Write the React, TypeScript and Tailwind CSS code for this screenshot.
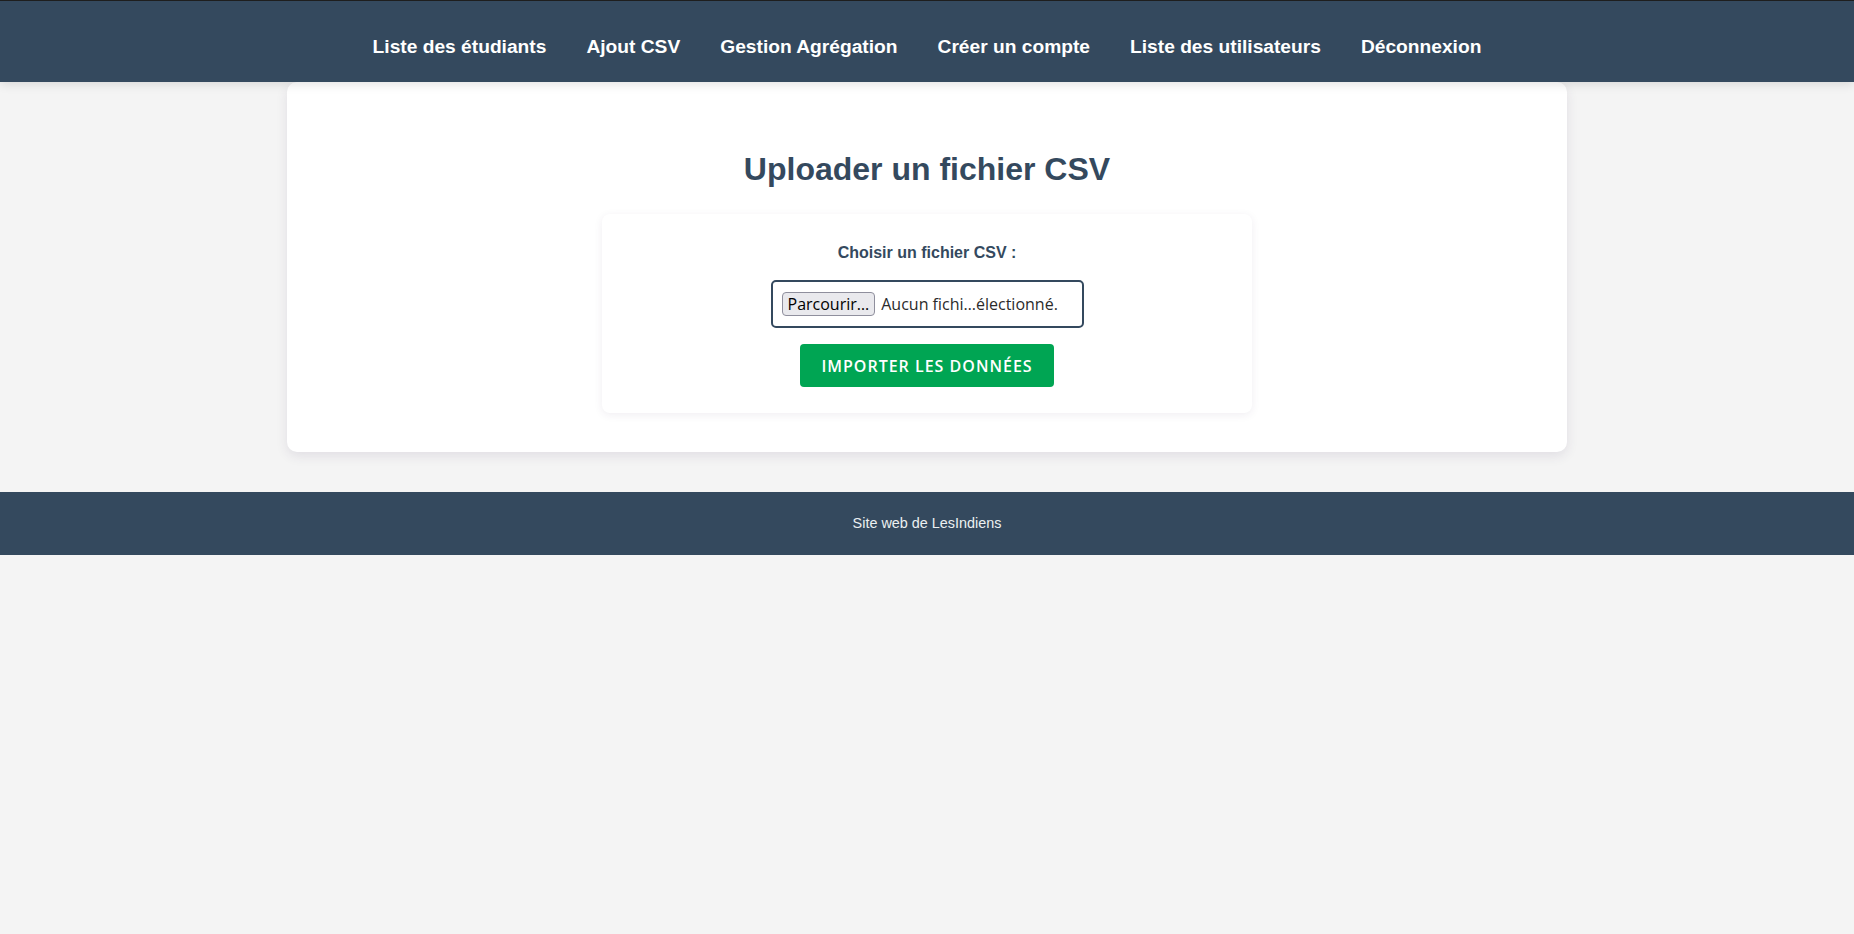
import { useState } from "react";

const links = [
  "Liste des étudiants",
  "Ajout CSV",
  "Gestion Agrégation",
  "Créer un compte",
  "Liste des utilisateurs",
  "Déconnexion",
];

function Navbar() {
  return (
    <nav className="relative z-10 h-[82px] bg-[#34495e] border-t border-[#1e1e1e] shadow-[0_2px_10px_rgba(0,0,0,0.12)]">
      <ul className="flex justify-center gap-[40px] pt-[34px]">
        {links.map((l) => (
          <li key={l}>
            <a
              href="#"
              className="text-white font-bold text-[19.2px] leading-[22px] hover:text-[#1abc9c]"
              style={{ fontFamily: "'Liberation Sans', Arial, sans-serif" }}
            >
              {l}
            </a>
          </li>
        ))}
      </ul>
    </nav>
  );
}

function UploadForm() {
  const [fileName, setFileName] = useState("Aucun fichi…électionné.");
  return (
    <form
      className="w-[650px] mx-auto bg-white rounded-[8px] shadow-[0_2px_8px_rgba(60,40,90,0.08)] pt-[30px] pb-[26px] flex flex-col items-center"
      onSubmit={(e) => e.preventDefault()}
    >
      <label
        htmlFor="csv"
        className="text-[16px] leading-[18px] font-bold text-[#34495e] mb-[18px]"
        style={{ fontFamily: "'Liberation Sans', Arial, sans-serif" }}
      >
        Choisir un fichier CSV :
      </label>
      <label
        className="w-[313px] h-[48px] flex items-center border-2 border-[#34495e] rounded-[5px] px-[9px] bg-white cursor-pointer"
        style={{ fontFamily: "'Open Sans', 'Noto Sans', sans-serif" }}
      >
        <span className="bg-[#e9e9ed] border border-[#8f8f9d] rounded-[4px] px-[5px] text-[16px] leading-[22px] text-black">
          Parcourir…
        </span>
        <span className="ml-[6px] text-[16px] leading-[22px] text-[#2b2b2b] whitespace-nowrap">
          {fileName}
        </span>
        <input
          id="csv"
          type="file"
          accept=".csv"
          className="hidden"
          onChange={(e) => {
            const f = e.target.files?.[0];
            if (f) setFileName(f.name);
          }}
        />
      </label>
      <button
        type="submit"
        className="mt-[16px] w-[254px] h-[43px] bg-[#00a553] rounded-[4px] text-white uppercase font-semibold text-[16px] tracking-[1px]"
        style={{ fontFamily: "'Open Sans', 'Noto Sans', sans-serif" }}
      >
        Importer les données
      </button>
    </form>
  );
}

export default function App() {
  return (
    <div className="min-h-screen bg-[#f4f4f4]">
      <Navbar />
      <main className="w-[1280px] mx-auto bg-white rounded-[10px] shadow-[0_4px_12px_rgba(60,40,90,0.1)] px-[40px] pt-[40px] pb-[39px] mb-[40px]">
        <h2
          className="text-center text-[32px] leading-[37px] font-bold text-[#34495e] mt-[29px] mb-[26px]"
          style={{ fontFamily: "'Liberation Sans', Arial, sans-serif" }}
        >
          Uploader un fichier CSV
        </h2>
        <UploadForm />
      </main>
      <footer className="bg-[#34495e] h-[63px] flex items-center justify-center">
        <p
          className="text-[14.4px] leading-[17px] text-[#ecf0f1]"
          style={{ fontFamily: "'Liberation Sans', Arial, sans-serif" }}
        >
          Site web de LesIndiens
        </p>
      </footer>
    </div>
  );
}
